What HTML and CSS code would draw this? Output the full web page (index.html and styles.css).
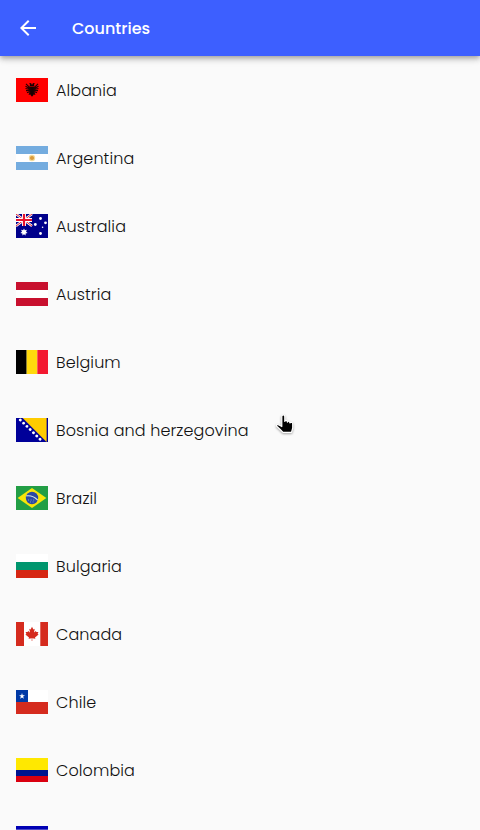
FILE: index.html
```html
<!DOCTYPE html>
<html lang="en">
<head>
<meta charset="utf-8">
<title>Countries</title>
<link rel="stylesheet" href="styles.css">
</head>
<body>
<div class="app">
  <header class="bar">
    <svg class="back" viewBox="0 0 24 24"><path fill="#fff" d="M20 11H7.83l5.59-5.59L12 4l-8 8 8 8 1.41-1.41L7.83 13H20z"/></svg>
    <h1 class="title">Countries</h1>
  </header>
  <ul class="list">
    <li class="row">
      <svg class="flag" viewBox="0 0 32 24"><path fill="red" d="M0 0h32v24H0z"/><path fill="#170000" d="M16 7l-1-2-2 .4 1 1-.4 2h4.800l-.4-2 1-1-2-.4zM13.500 8h5v6l-.8 2.800L16 18.700l-1.700-1.900-.8-2.800z"/><path fill="none" stroke="#250000" stroke-width="1.200" d="M14.500 10.300 10 5.800M14.500 11l-5-2.700M14.500 11.700l-5-1.200M14.500 12.500l-4.500.2M14.500 13.200l-3.500 1.500M14.500 14l-1.500 2.800M17.500 10.300l4.500-4.500M17.500 11l5-2.700M17.500 11.700l5-1.200M17.500 12.500l4.500.2M17.500 13.200l3.500 1.500M17.500 14l1.500 2.800"/></svg>
      <span class="name">Albania</span>
    </li>
    <li class="row">
      <svg class="flag" viewBox="0 0 32 24"><path fill="#74acdf" d="M0 0h32v24H0z"/><path fill="#fff" d="M0 8h32v8H0z"/><circle cx="16" cy="12" r="3.200" fill="#f3dc9c"/><circle cx="16" cy="12" r="2.100" fill="#d99b3e"/></svg>
      <span class="name">Argentina</span>
    </li>
    <li class="row">
      <svg class="flag" viewBox="0 0 32 24"><path fill="#00008b" d="M0 0h32v24H0z"/><path stroke="#fff" stroke-width="2.400" d="m0 0 16 12M16 0 0 12"/><path stroke="#e02030" stroke-width="1" d="m0 0 16 12M16 0 0 12"/><path stroke="#fff" stroke-width="4" d="M8 0v12M0 6h16"/><path stroke="#e8112d" stroke-width="2.200" d="M8 0v12M0 6h16"/><g fill="#fff"><path d="m8 14.500.9 1.800 2-.5-.9 1.900 1.600 1.200-2 .5v2L8 20.200l-1.600 1.200v-2l-2-.5L6 17.700l-.9-1.900 2 .5z"/><circle cx="24.500" cy="4.500" r="1.400"/><circle cx="19.300" cy="10.500" r="1.400"/><circle cx="29.500" cy="8.800" r="1.400"/><circle cx="24.500" cy="19.500" r="1.400"/><circle cx="26.600" cy="13.300" r=".8"/></g></svg>
      <span class="name">Australia</span>
    </li>
    <li class="row">
      <svg class="flag" viewBox="0 0 32 24"><path fill="#c8102e" d="M0 0h32v24H0z"/><path fill="#fff" d="M0 8h32v8H0z"/></svg>
      <span class="name">Austria</span>
    </li>
    <li class="row">
      <svg class="flag" viewBox="0 0 32 24"><path d="M0 0h10.670v24H0z"/><path fill="#ffd90c" d="M10.670 0h10.660v24H10.670z"/><path fill="#f31830" d="M21.330 0H32v24H21.330z"/></svg>
      <span class="name">Belgium</span>
    </li>
    <li class="row">
      <svg class="flag" viewBox="0 0 32 24"><path fill="#009" d="M0 0h32v24H0z"/><path fill="#fc0" d="M6.600 0h24v24z"/><path fill="none" stroke="#fff" stroke-width="2.800" stroke-linecap="round" stroke-dasharray="0.010 4.600" d="m4.300 1.900 22.500 22.100"/></svg>
      <span class="name">Bosnia and herzegovina</span>
    </li>
    <li class="row">
      <svg class="flag" viewBox="0 0 32 24"><path fill="#229e45" d="M0 0h32v24H0z"/><path fill="#f8e509" d="m1.600 12 14.400-10 14.400 10L16 22z"/><circle cx="16" cy="12" r="6.200" fill="#2b49a3"/><path fill="none" stroke="#d8e8e0" stroke-width="1.100" d="M10.200 9.900q7-.8 11.500 4.300"/><path stroke="#9badd2" stroke-width=".8" stroke-dasharray="1 1.600" d="M12 14h8M14 16h5"/></svg>
      <span class="name">Brazil</span>
    </li>
    <li class="row">
      <svg class="flag" viewBox="0 0 32 24"><path fill="#fff" d="M0 0h32v8H0z"/><path fill="#00966e" d="M0 8h32v8H0z"/><path fill="#d62612" d="M0 16h32v8H0z"/></svg>
      <span class="name">Bulgaria</span>
    </li>
    <li class="row">
      <svg class="flag" viewBox="0 0 32 24"><path fill="#fff" d="M0 0h32v24H0z"/><path fill="#d52b1e" d="M0 0h8v24H0zM24.300 0H32v24h-7.700zM16 4.800l-1.400 2.600-1.300-.6.700 3.700-1.900-1.500-.5 1.100-2-.2.800 2-1 .5 3.600 3-.4 1.300 3.200-.5-.1 2.900h.6l-.1-2.900 3.200.5-.4-1.300 3.600-3-1-.5.8-2-2 .2-.5-1.100-1.900 1.500.7-3.700-1.300.6z"/></svg>
      <span class="name">Canada</span>
    </li>
    <li class="row">
      <svg class="flag" viewBox="0 0 32 24"><path fill="#fff" d="M0 0h32v12H0z"/><path fill="#0039a6" d="M0 0h12v12H0z"/><path fill="#d52b1e" d="M0 12h32v12H0z"/><path fill="#fff" d="m6 3 .7 2.200H9L7.150 6.600l.7 2.250L6 7.500 4.150 8.850l.7-2.250L3 5.200h2.300z"/></svg>
      <span class="name">Chile</span>
    </li>
    <li class="row">
      <svg class="flag" viewBox="0 0 32 24"><path fill="#ffe800" d="M0 0h32v12H0z"/><path fill="#00148e" d="M0 12h32v6H0z"/><path fill="#da0010" d="M0 18h32v6H0z"/></svg>
      <span class="name">Colombia</span>
    </li>
    <li class="row">
      <svg class="flag" viewBox="0 0 32 24"><path fill="#0000b4" d="M0 0h32v24H0z"/><path fill="#fff" d="M0 3.700h32v16.600H0z"/><path fill="#d90000" d="M0 8h32v8H0z"/></svg>
    </li>
  </ul>
  <svg class="pointer" viewBox="0 0 20 22"><path stroke="#fff" stroke-width="1.200" stroke-linejoin="round" d="M6.800 3.500q0-1.500 1.500-1.500t1.500 1.500v5l.4-1q1.400-.6 1.900.6l.3 1 .4-.7q1.400-.6 1.900.6l.3 1 .4-.6q2.300-.5 2.300 1.300v4.300l-1.200 4.300H8l-2.800-2.800L1.500 13q-.3-1.800 2-1.200l3.300 1.700z"/></svg>
</div>
</body>
</html>
```
FILE: styles.css
```css
* { box-sizing: border-box; }
body { margin: 0; background: #fafafa; }
.app {
  position: relative;
  height: 830px;
  overflow: hidden;
  font-family: Poppins, Inter, sans-serif;
  color: #212121;
}
.bar {
  position: relative;
  display: flex;
  align-items: center;
  height: 56px;
  padding-left: 16px;
  background: #3d5fff;
  box-shadow: 0 2px 4px -1px rgba(0,0,0,.2), 0 4px 5px rgba(0,0,0,.14), 0 1px 10px rgba(0,0,0,.12);
}
.back { width: 24px; height: 24px; }
.title { margin: 0 0 0 32px; padding-top: 2px; color: #fff; font-size: 16px; font-weight: 500; line-height: 24px; }
.list { margin: 0; padding: 0; list-style: none; }
.row { display: flex; align-items: center; gap: 8px; height: 68px; padding-left: 16px; }
.flag { display: block; flex: none; width: 32px; height: 24px; }
.name { padding-top: 2px; color: #111; font-size: 16px; font-weight: 300; letter-spacing: .1px; line-height: 24px; white-space: nowrap; }
.pointer {
  position: absolute;
  left: 275px;
  top: 413px;
  width: 20px;
  height: 22px;
  filter: drop-shadow(0 1px 1px rgba(0,0,0,.35));
}
```
